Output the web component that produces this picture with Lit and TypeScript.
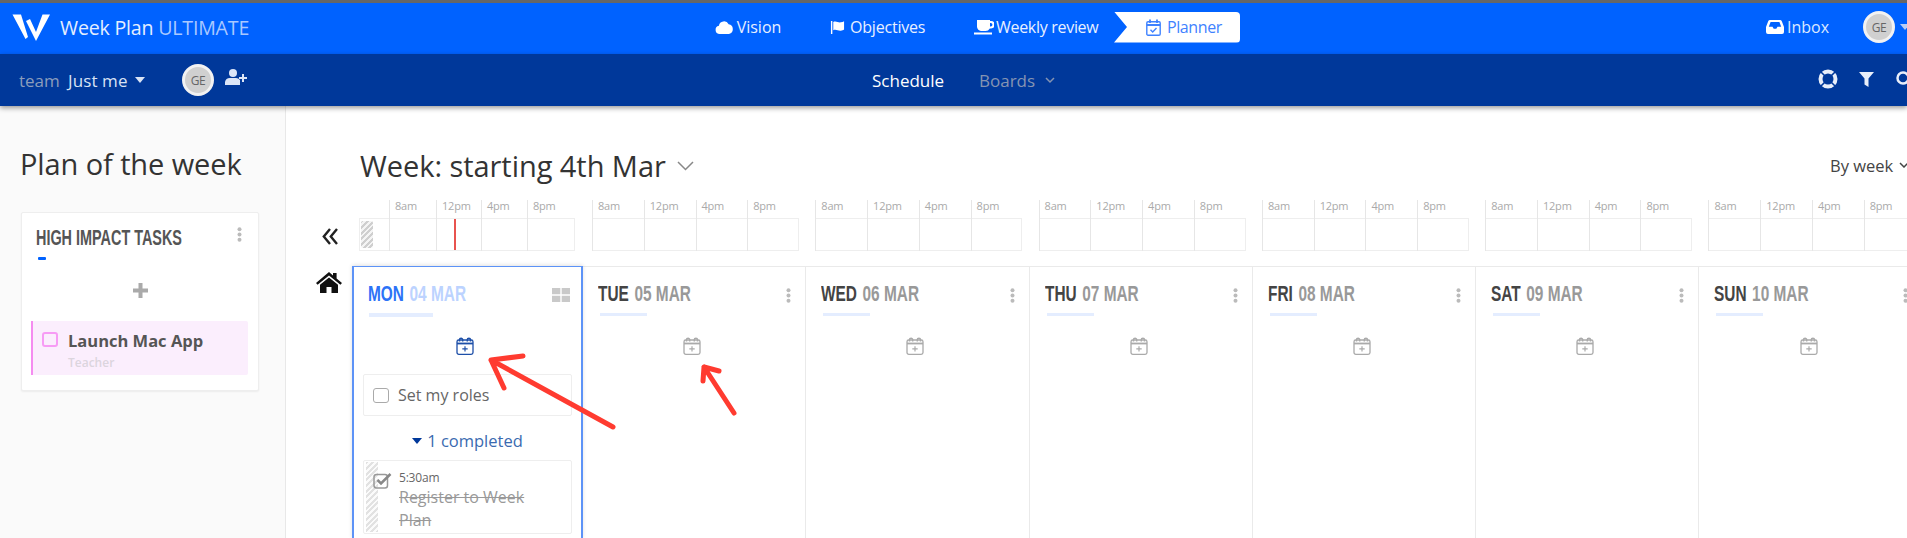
import { LitElement, html, css, svg } from "lit";
import { customElement } from "lit/decorators.js";

const calPlus = (color: string) => html`<svg class="calp" viewBox="0 0 18 18" fill="none" stroke=${color} stroke-width="1.3"><rect x="1" y="3" width="16" height="14.300" rx="1.800"/><path d="M1 6.500h16" stroke-width="1.800"/><path d="M3.500 4.500V2.800a1.600 1.600 0 0 1 3.200 0v1.700M11.300 4.500V2.800a1.600 1.600 0 0 1 3.200 0v1.700" stroke-width="1.500"/><path d="M9 9.200v5.400M6.300 11.900h5.400" stroke-width="1.200"/></svg>`;
const dots = html`<svg class="dots" viewBox="0 0 5 15" fill="#bbb"><circle cx="2.5" cy="2.2" r="2"/><circle cx="2.5" cy="7.5" r="2"/><circle cx="2.5" cy="12.8" r="2"/></svg>`;

const days = [
  ["TUE", "05 MAR"], ["WED", "06 MAR"], ["THU", "07 MAR"],
  ["FRI", "08 MAR"], ["SAT", "09 MAR"], ["SUN", "10 MAR"],
];

@customElement("app-root")
export class AppRoot extends LitElement {
  static styles = css`
    :host { display: block; width: 1907px; height: 538px; overflow: hidden; position: relative; font-family: "Open Sans", sans-serif; color: #333; background: #fff; }
    .top { height: 51px; border-top: 3px solid #666; background: #0062ff; display: flex; align-items: center; color: #fff; font-size: 16px; white-space: nowrap; }
    .top > *, .sub > *, .icons > * { flex: none; }
    .logo { width: 38px; height: 28px; margin-left: 12px; margin-top: -3px; }
    .brand { font-size: 19.6px; margin-left: 10px; margin-top: -3px; color: #e4eeff; letter-spacing: -0.2px; width: 189px; }
    .brand span { color: #a9c8ff; }
    .nav { display: flex; align-items: center; color: #e8f0ff; margin-top: -3px; }
    .nav svg { height: 16px; margin-right: 5px; fill: #fff; }
    .n1 { margin-left: 466px; width: 115px; }
    .n2 { width: 143px; letter-spacing: -0.2px; }
    .n3 { width: 141px; letter-spacing: -0.3px; }
    .item { display: flex; align-items: center; }
    .ribbon { width: 126px; height: 31px; margin-top: -3px; position: relative; color: #3f82ff; display: flex; align-items: center; padding-left: 32px; box-sizing: border-box; background: #fff; border-radius: 0 4px 4px 0; clip-path: polygon(0 0, 100% 0, 100% 100%, 0 100%, 13px 50%); letter-spacing: -0.4px; }
    .ribbon svg { width: 15px; height: 17px; margin-right: 6px; }
    .inbox { margin-left: 526px; width: 97px; margin-top: -3px; color: #dce9ff; }
    .inbox svg { width: 18px; height: 14px; margin-right: 3px; fill: #fff; }
    .avatar { width: 32px; height: 32px; border-radius: 50%; border: 3px solid #f2f2f2; background: #d0d0d0; box-sizing: border-box; color: #666; font-size: 12px; display: flex; align-items: center; justify-content: center; letter-spacing: -0.5px; }
    .top .avatar { margin-top: -3px; }
    .caret { width: 0; height: 0; border: 5.5px solid transparent; border-top: 6px solid currentColor; border-bottom: 0; }
    .topcaret { color: #b9cef5; margin-left: 5px; margin-top: -3px; }
    .sub { height: 52px; background: #00389a; display: flex; align-items: center; color: #d9e3f5; box-shadow: 0 2px 5px rgba(0,0,0,.4); position: relative; white-space: nowrap; font-size: 17px; }
    .team { color: #8b9dbc; margin-left: 19px; width: 48px; }
    .just { width: 68px; padding-left: 1px; box-sizing: border-box; letter-spacing: 0.1px; }
    .sub .avatar { margin-left: 37px; margin-top: 0; }
    .adduser { width: 22px; height: 16px; fill: #dbe5f7; margin-left: 11px; margin-top: -6px; }
    .sched { margin-left: 625px; color: #fff; width: 107px; }
    .boards { color: #8594b2; width: 66px; }
    .bchev { width: 10px; height: 7px; }
    .icons { margin-left: 763px; display: flex; align-items: center; }
    .buoy { width: 20px; height: 20px; margin-top: -2px; }
    .filter { width: 15px; height: 15px; margin-left: 21px; margin-top: -2px; }
    .search { width: 16px; height: 16px; margin-left: 22px; margin-top: -2px; }
    .body { display: flex; height: 432px; overflow: hidden; }
    .side { width: 286px; flex: none; background: #fafafa; border-right: 1px solid #e8e8e8; box-sizing: border-box; padding: 40px 0 0 21px; }
    .side h2 { font-weight: 400; font-size: 29px; line-height: 36px; margin: 0 0 30px -1px; color: #333; letter-spacing: -0.1px; }
    .card { width: 238px; height: 179px; background: #fff; border: 1px solid #eee; box-sizing: border-box; border-radius: 2px; box-shadow: 0 1px 2px rgba(0,0,0,.06); padding: 14px 9px 0; position: relative; }
    .chead { display: flex; justify-content: space-between; padding: 0 7px 0 5px; align-items: flex-start; }
    .cond { font-family: "Liberation Sans", sans-serif; font-weight: 700; display: inline-block; transform-origin: left center; white-space: nowrap; }
    .ctitle { font-size: 22px; line-height: 22px; color: #555; transform: scaleX(0.655); width: 150px; }
    .dots { width: 5px; height: 15px; display: block; }
    .dash { width: 8px; height: 3px; background: #0062ff; margin: 8px 0 0 7px; border-radius: 1px; }
    .plus { display: block; width: 15px; height: 15px; margin: 23px auto 0; fill: #aaa; }
    .task { margin-top: 23px; height: 54px; background: #fbeefd; border-left: 2px solid #f58cf0; box-sizing: border-box; display: flex; padding: 11px 0 0 9px; border-radius: 0 2px 2px 0; width: 217px; }
    .tbox { width: 16px; height: 15px; border: 2px solid #f79cf5; border-radius: 3px; box-sizing: border-box; flex: none; margin-right: 10px; }
    .tname { font-size: 16.5px; font-weight: 700; color: #555; line-height: 19px; margin-top: -1px; }
    .trole { font-size: 12px; font-weight: 600; color: #dcd5de; line-height: 16px; margin-top: 5px; }
    .main { flex: 1; min-width: 0; overflow: hidden; }
    .head { display: flex; align-items: center; height: 40px; margin-top: 40px; padding-left: 74px; }
    .head .title { font-size: 29px; color: #333; letter-spacing: -0.05px; width: 317px; line-height: 40px; white-space: nowrap; }
    .hchev { width: 17px; height: 10px; }
    .byweek { margin-left: auto; font-size: 16.5px; color: #444; width: 77px; flex: none; display: flex; align-items: center; white-space: nowrap; margin-top: -2px; }
    .byweek svg { width: 10px; height: 6px; margin-left: 6px; flex: none; }
    .tl { display: flex; height: 51px; margin-top: 14px; padding-left: 73px; }
    .tg { display: grid; flex: none; box-sizing: border-box; margin-right: 16.300px; }
    .tg.first { width: 217px; grid-template-columns: 30px 47px 45px 46px 48px; margin-right: 16px; }
    .tg.rest { width: 207px; grid-template-columns: repeat(4, 1fr); }
    .tc { border-left: 1px solid #e6e6e6; position: relative; height: 51px; box-sizing: border-box; display: flex; flex-direction: column; }
    .tc.stripe { border-left: 0; }
    .tl-label { font-size: 11px; color: #aaa; height: 18px; line-height: 12px; padding-left: 5px; white-space: nowrap; letter-spacing: -0.2px; }
    .tb { flex: 1; border-top: 1px solid #eee; border-bottom: 1px solid #eee; position: relative; }
    .tc:last-child .tb { border-right: 1px solid #eee; }
    .tc.stripe .tb { border-left: 1px solid #eee; }
    .sbar { position: absolute; left: 1px; top: 2px; bottom: 2px; width: 12px; border-radius: 2px; background: repeating-linear-gradient(135deg, #cfcfcf 0 2px, #f4f4f4 2px 4px); }
    .now { position: absolute; left: 17px; top: 0; bottom: 0; width: 2px; background: #e8534f; }
    .week { display: flex; margin-top: 15px; height: 272px; border-top: 1px solid #eaeaea; margin-left: 66px; position: relative; }
    .dbl { position: absolute; left: 322px; top: 228px; width: 16px; height: 17px; }
    .home { position: absolute; left: 316px; top: 272px; width: 26px; height: 21px; }
    .col { width: 223.3px; flex: none; border-right: 1px solid #eaeaea; box-sizing: border-box; padding: 16px 15px 0 15px; position: relative; }
    .col.today { width: 231px; border: 2px solid #5d93f7; border-width: 1.5px 2px 0 2px; margin-top: -1px; padding: 16px 9px 0 9px; box-shadow: 0 -1px 4px rgba(0,0,0,.12); }
    .dh { display: flex; justify-content: space-between; align-items: flex-start; height: 21px; }
    .dn { font-size: 22px; line-height: 21px; color: #444; transform: scaleX(0.7); width: 120px; }
    .dn span { color: #999; margin-left: 8px; }
    .today .dn { color: #2c73f7; margin-left: 5px; }
    .today .dn span { color: #bcd3ff; }
    .grid { width: 18px; height: 14px; margin-top: 5px; margin-right: 2px; fill: #c9c9c9; }
    .ul { width: 47px; height: 3px; background: #e4edff; margin: 9px 0 0 2px; }
    .today .ul { width: 64px; margin-left: 6px; height: 4px; }
    .calp { display: block; width: 18px; height: 18px; margin: 21px auto 0; position: relative; left: -2px; }
    .col .dots { margin-top: 5px; margin-right: -1px; }
    .today .calp { margin-top: 20px; left: -3px; }
    .box { border: 1px solid #eee; border-radius: 2px; }
    .roles { height: 42px; margin-top: 19px; display: flex; align-items: center; font-size: 16px; color: #666; box-sizing: border-box; padding-left: 9px; }
    .cb { width: 16px; height: 15px; border: 1.5px solid #aaa; border-radius: 3px; box-sizing: border-box; margin-right: 9px; flex: none; }
    .comp { display: flex; align-items: center; justify-content: center; color: #3a6ab0; font-size: 16.5px; height: 24px; margin-top: 12px; }
    .comp .caret { color: #00389a; margin-right: 5px; margin-top: 1px; }
    .done { margin-top: 8px; height: 74px; position: relative; box-sizing: border-box; padding: 9px 0 0 35px; }
    .done .st { position: absolute; left: 2px; top: 1px; bottom: 1px; width: 12px; background: repeating-linear-gradient(135deg, #e2e2e2 0 2px, #fbfbfb 2px 4px); }
    .done .ck { position: absolute; left: 9px; top: 11px; width: 19px; height: 17px; }
    .time { font-size: 12px; line-height: 15px; color: #666; letter-spacing: -0.2px; }
    .strike { font-size: 16px; line-height: 23px; color: #999; text-decoration: line-through; margin-top: 1px; width: 150px; }
    .arrows { position: absolute; left: 0; top: 0; width: 1907px; height: 538px; pointer-events: none; }
  `;

  tcell(label: string, now = false) {
    return html`<div class="tc"><div class="tl-label">${label}</div><div class="tb">${now ? html`<div class="now"></div>` : ""}</div></div>`;
  }

  render() {
    return html`
      <div class="top">
        <svg class="logo" viewBox="0 0 38 28" fill="#fff"><path d="M.5 1.500H9L16 24l-2.500 2zM14 8l4-2 6 13 6.500-17.500H38L24 28z"/></svg>
        <div class="brand">Week Plan <span>ULTIMATE</span></div>
        <div class="nav n1 item"><svg viewBox="0 0 20 15" style="height:14px;margin-right:3px"><path d="M5 15a4.500 4.500 0 0 1-.8-8.900A5.500 5.500 0 0 1 14.600 4.600 5.300 5.300 0 0 1 15 15z"/></svg>Vision</div>
        <div class="nav n2 item"><svg viewBox="0 0 16 16" style="height:15px"><path d="M1 1h1.500v14H1zM3.500 2c3-1.500 5 1 8 .5 1.500-.2 2.500-.7 3.500-1.300v8.800c-1 .7-2 1.200-3.500 1.400-3 .4-5-2-8-.5z"/></svg>Objectives</div>
        <div class="nav n3 item"><svg viewBox="0 0 21 16" style="height:16px;margin-right:2px"><path d="M4 1h13v1h1a3 3 0 0 1 0 7.500h-1.200A5 5 0 0 1 12 12H8a5 5 0 0 1-4-4zM17 4v3.500h.7a1.700 1.700 0 0 0 0-3.500zM1 13.600h18v2H1z"/></svg>Weekly review</div>
        <div class="ribbon"><svg viewBox="0 0 15 17" fill="none" stroke="#3f82ff" stroke-width="1.400"><rect x=".8" y="2.800" width="13.400" height="13.400" rx="1.200"/><path d="M.8 6h13.400M4 .5v3.500M11 .5v3.500" stroke-width="1.800"/><path d="M4.500 10.800l2.200 2.200 3.800-4"/></svg>Planner</div>
        <div class="inbox item"><svg viewBox="0 0 18 14"><path fill-rule="evenodd" d="M4 0h10a2 2 0 0 1 1.800 1.200L18 7v5a2 2 0 0 1-2 2H2a2 2 0 0 1-2-2V7l2.200-5.800A2 2 0 0 1 4 0zm.6 2L2.800 6.800h3.700l1.200 2h2.600l1.200-2h3.700L13.400 2z"/></svg>Inbox</div>
        <div class="avatar">GE</div>
        <div class="caret topcaret"></div>
      </div>
      <div class="sub">
        <div class="team">team</div>
        <div class="just">Just me</div>
        <div class="caret"></div>
        <div class="avatar">GE</div>
        <svg class="adduser" viewBox="0 0 22 16"><circle cx="8" cy="4" r="4"/><path d="M0 16v-3a5 5 0 0 1 5-4h6a5 5 0 0 1 4 2v5zM17 5h2v3h3v2h-3v3h-2v-3h-3V8h3z"/></svg>
        <div class="sched">Schedule</div>
        <div class="boards">Boards</div>
        <svg class="bchev" viewBox="0 0 10 7" fill="none" stroke="#8594b2" stroke-width="1.500"><path d="M1 1l4 4 4-4"/></svg>
        <div class="icons">
          <svg class="buoy" viewBox="0 0 20 20" fill="none" stroke="#e8eefa"><circle cx="10" cy="10" r="7.500" stroke-width="4"/><g stroke="#00389a" stroke-width="1.600"><path d="M3 3l5 5M17 3l-5 5M3 17l5-5M17 17l-5-5"/></g></svg>
          <svg class="filter" viewBox="0 0 15 15" fill="#e8eefa"><path d="M0 0h15L9.500 6.500V15L5.500 12.500V6.500z"/></svg>
          <svg class="search" viewBox="0 0 16 16" fill="none" stroke="#e8eefa" stroke-width="2.500"><circle cx="7" cy="7" r="5.500"/><path d="M11 11l4 4"/></svg>
        </div>
      </div>
      <div class="body">
        <div class="side">
          <h2>Plan of the week</h2>
          <div class="card">
            <div class="chead"><div class="ctitle cond">HIGH IMPACT TASKS</div>${dots}</div>
            <div class="dash"></div>
            <svg class="plus" viewBox="0 0 15 15"><path d="M5.500 0h4v5.500H15v4H9.500V15h-4V9.500H0v-4h5.500z"/></svg>
            <div class="task"><div class="tbox"></div><div><div class="tname">Launch Mac App</div><div class="trole">Teacher</div></div></div>
          </div>
        </div>
        <div class="main">
          <div class="head">
            <div class="title">Week: starting 4th Mar</div>
            <svg class="hchev" viewBox="0 0 17 10" fill="none" stroke="#888" stroke-width="1.500"><path d="M1 1l7.500 7.500L16 1"/></svg>
            <div class="byweek">By week<svg viewBox="0 0 10 6" fill="none" stroke="#444" stroke-width="1.500"><path d="M1 1l4 4 4-4"/></svg></div>
          </div>
          <div class="tl">
            <div class="tg first">
              <div class="tc stripe"><div class="tl-label"></div><div class="tb"><div class="sbar"></div></div></div>
              ${this.tcell("8am")}${this.tcell("12pm", true)}${this.tcell("4pm")}${this.tcell("8pm")}
            </div>
            ${days.map(() => html`<div class="tg rest">${this.tcell("8am")}${this.tcell("12pm")}${this.tcell("4pm")}${this.tcell("8pm")}</div>`)}
          </div>
          <div class="week">
            <div class="col today">
              <div class="dh"><div class="dn cond">MON<span>04 MAR</span></div>
                <svg class="grid" viewBox="0 0 18 14"><path d="M0 0h8.300v6.300H0zM9.700 0H18v6.300H9.700zM0 7.700h8.300V14H0zM9.700 7.700H18V14H9.700z"/></svg></div>
              <div class="ul"></div>
              ${calPlus("#1d4fa8")}
              <div class="roles box"><div class="cb"></div>Set my roles</div>
              <div class="comp"><div class="caret"></div>1 completed</div>
              <div class="done box">
                <div class="st"></div>
                <svg class="ck" viewBox="0 0 19 17" fill="none"><rect x="1" y="2.500" width="13.500" height="13.500" rx="2.500" stroke="#999" stroke-width="1.500"/><path d="M4.500 8l3.500 3.500L17.500 2" stroke="#888" stroke-width="2.500"/></svg>
                <div class="time">5:30am</div>
                <div class="strike">Register to Week Plan</div>
              </div>
            </div>
            ${days.map((d) => html`<div class="col">
              <div class="dh"><div class="dn cond">${d[0]}<span>${d[1]}</span></div>${dots}</div>
              <div class="ul"></div>
              ${calPlus("#aaa")}
            </div>`)}
          </div>
        </div>
      </div>
      <svg class="dbl" viewBox="0 0 16 17" fill="none" stroke="#222" stroke-width="2.400"><path d="M8 1L1.800 8.500 8 16M15 1L8.800 8.500 15 16"/></svg>
      <svg class="home" viewBox="0 0 26 21"><path fill="#111" d="M13 0l4 3.400V1h3.600v5.500L26 11l-1.600 1.800L13 3.500 1.600 12.800 0 11zM13 5.500l9 7.300V21h-6.500v-6h-5v6H4v-8.200z"/></svg>
      <svg class="arrows" viewBox="0 0 1907 538" fill="none" stroke="#ff3b30" stroke-width="5" stroke-linecap="round" stroke-linejoin="round">
        ${svg`<path d="M613 427 L491 360 M523 356 L491 360 L504 388"/>`}
        ${svg`<path d="M734 413 L704 367 M719 371 L704 367 L703 381"/>`}
      </svg>
    `;
  }
}
